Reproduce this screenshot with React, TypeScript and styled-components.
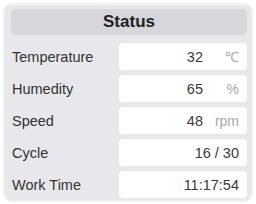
import React from 'react'
import styled, { createGlobalStyle } from 'styled-components'

const GlobalStyle = createGlobalStyle`
  html, body {
    margin: 0;
    padding: 0;
    background: #fff;
    font-family: "Liberation Sans", Arial, sans-serif;
  }
`

const rows = [
  { label: 'Temperature', value: '32', unit: '℃' },
  { label: 'Humedity', value: '65', unit: '%' },
  { label: 'Speed', value: '48', unit: 'rpm' },
  { label: 'Cycle', value: '16 / 30' },
  { label: 'Work Time', value: '11:17:54' },
]

export default function App() {
  return (
    <>
      <GlobalStyle />
      <Panel>
        <Title>Status</Title>
        <List>
          {rows.map(r => (
            <Row key={r.label}>
              <Label>{r.label}</Label>
              <ValueBox>
                <Value>{r.value}</Value>
                {r.unit && <Unit>{r.unit}</Unit>}
              </ValueBox>
            </Row>
          ))}
        </List>
      </Panel>
    </>
  )
}

const Panel = styled.div`
  box-sizing: border-box;
  margin: 3px;
  width: 250px;
  height: 199px;
  padding: 4px 4px 2px 6px;
  background: #e8e8ec;
  border: 2px solid #f1f1f3;
  border-radius: 9px;
  display: flex;
  flex-direction: column;
`

const Title = styled.div`
  height: 26px;
  line-height: 26px;
  background: #d6d7db;
  border-radius: 5px;
  text-align: center;
  font-size: 17px;
  font-weight: bold;
  color: #222;
`

const List = styled.div`
  margin-top: 8px;
  display: flex;
  flex-direction: column;
  gap: 5px;
`

const Row = styled.div`
  display: grid;
  grid-template-columns: 108px 1fr;
  height: 27px;
  align-items: center;
`

const Label = styled.div`
  padding-left: 1px;
  font-size: 14.5px;
  color: #333;
`

const ValueBox = styled.div`
  height: 27px;
  background: #fff;
  border-radius: 4px;
  display: flex;
  align-items: center;
  justify-content: flex-end;
  padding-right: 8px;
`

const Value = styled.span`
  font-size: 14.5px;
  color: #3a3a3a;
`

const Unit = styled.span`
  width: 28px;
  margin-left: 8px;
  text-align: right;
  font-size: 14px;
  color: #a8a8a8;
`
